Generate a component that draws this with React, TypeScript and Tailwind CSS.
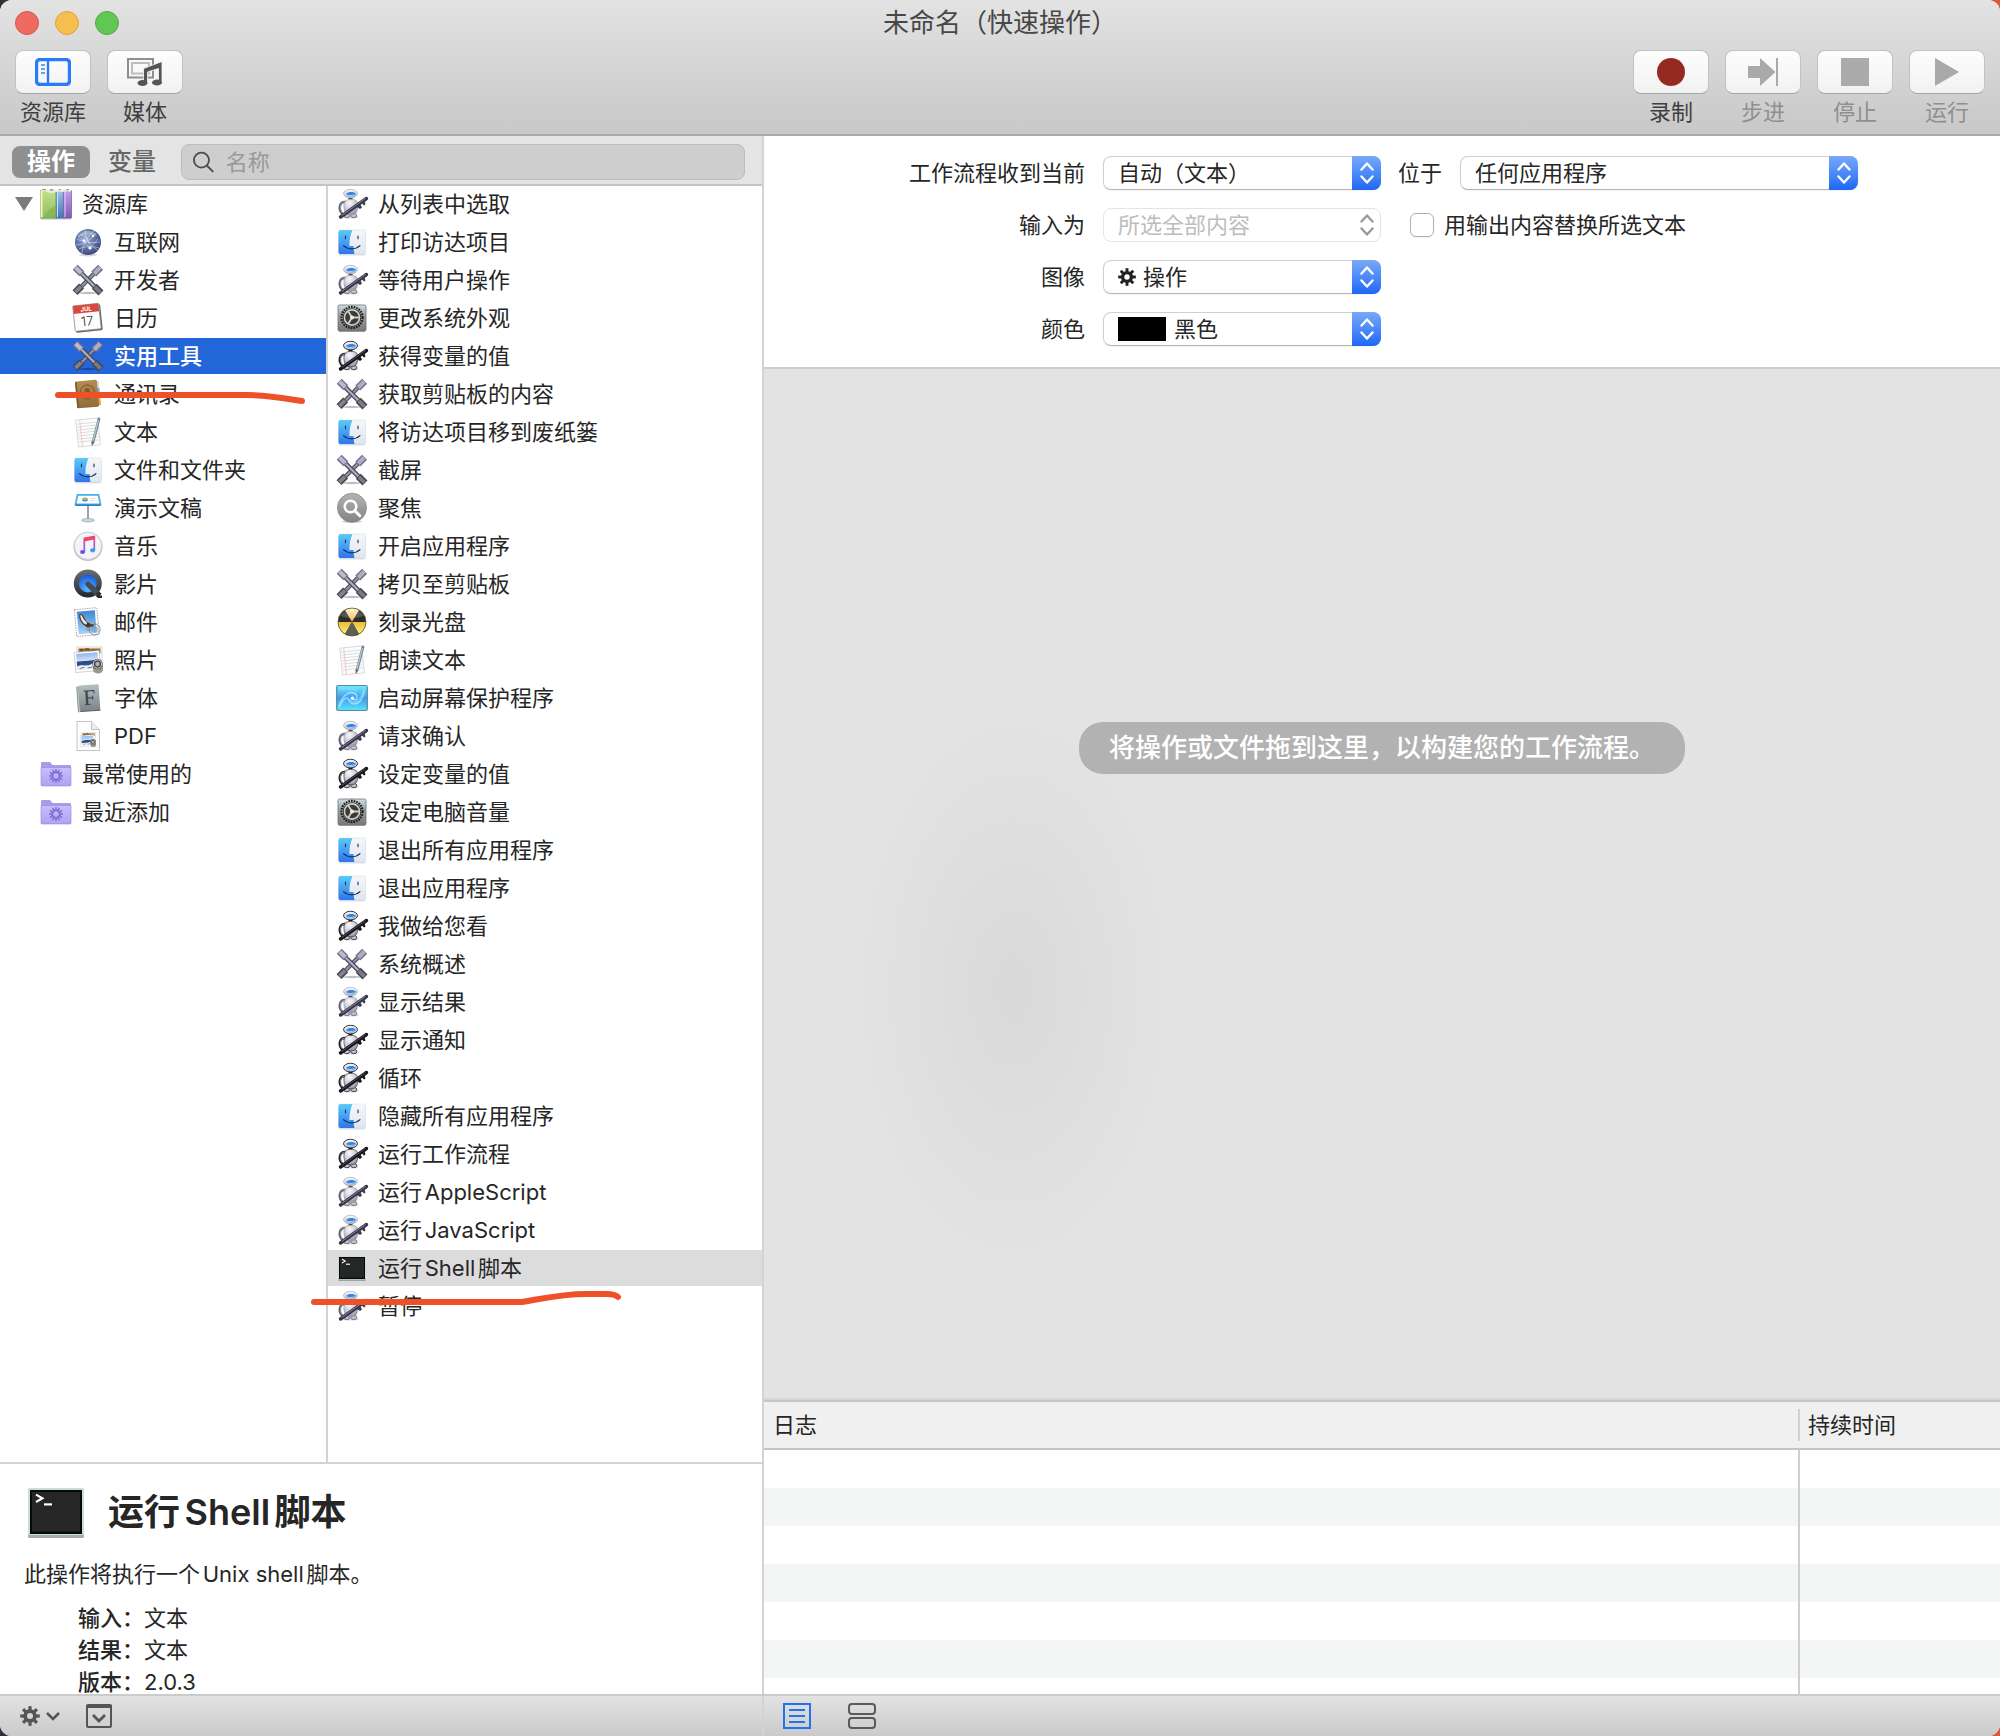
import React from "react";

type IconName =
  | "books" | "globe" | "tools" | "calendar" | "contacts" | "note" | "finder" | "keynote"
  | "music" | "quicktime" | "mail" | "photos" | "fontbook" | "pdf" | "folder" | "robot"
  | "robotDark" | "gearbox" | "spotlight" | "burn" | "swirl" | "terminal";

function Defs() {
  const grad = (id: string, stops: [string, string][], horizontal = false) => (
    <linearGradient id={id} x1="0" y1="0" x2={horizontal ? "1" : "0"} y2={horizontal ? "0" : "1"}>
      {stops.map(([o, c]) => (
        <stop key={o} offset={o} stopColor={c} />
      ))}
    </linearGradient>
  );
  return (
    <svg className="absolute size-0" aria-hidden="true">
      <defs>
        {grad("gGreen", [["0", "#c3e08c"], ["1", "#8fbf5c"]])}
        {grad("gBlueBook", [["0", "#9cc4ee"], ["1", "#3f76b4"]])}
        {grad("gPurple", [["0", "#c3a2e6"], ["1", "#8158b8"]])}
        {grad("gFinder", [["0", "#5ccbf9"], ["1", "#2f74ee"]])}
        {grad("gFinderR", [["0", "#f6f7f9"], ["1", "#dfe6f0"]])}
        {grad("gFolder", [["0", "#c9bdfb"], ["1", "#afa2f2"]])}
        {grad("gBox", [["0", "#d2dde0"], ["0.4", "#9aa1a3"], ["1", "#787878"]])}
        {grad("gQt", [["0", "#6a7078"], ["1", "#23262b"]])}
        {grad("gSpot", [["0", "#b4b4b4"], ["1", "#838383"]])}
        {grad("gMusic", [["0", "#f0446a"], ["0.55", "#a458dc"], ["1", "#3c8cf8"]])}
        {grad("gMail", [["0", "#3d86d4"], ["1", "#a8d2f4"]])}
        {grad("gPhoto", [["0", "#8fb7ee"], ["0.45", "#cfe0f6"], ["0.5", "#2c4a86"], ["0.75", "#31528e"], ["0.8", "#e7edf5"], ["1", "#cbd3dd"]])}
        {grad("gFont", [["0", "#b5bfc2"], ["1", "#7b8587"]])}
        {grad("gBoard", [["0", "#5fc0f2"], ["1", "#2a8fd8"]])}
        {grad("gSwirl", [["0", "#6ff0fb"], ["0.5", "#3d9bf0"], ["1", "#5ae6fb"]])}
        {grad("gBurnTop", [["0", "#fff3c8"], ["1", "#f1a843"]])}
        {grad("gBurnSide", [["0", "#e8b93c"], ["1", "#fff27a"]])}
        {grad("gContacts", [["0", "#b48d55"], ["1", "#936b38"]])}
        {grad("gHead", [["0", "#fafafc"], ["1", "#b9b9c4"]])}
        <radialGradient id="gGlobe" cx="0.4" cy="0.35" r="0.7">
          <stop offset="0" stopColor="#9fb0d4" />
          <stop offset="0.6" stopColor="#5a6c9e" />
          <stop offset="1" stopColor="#3a477a" />
        </radialGradient>
        <radialGradient id="gQtIn" cx="0.5" cy="0.8" r="0.8">
          <stop offset="0" stopColor="#56bcff" />
          <stop offset="1" stopColor="#1a55d8" />
        </radialGradient>
        <radialGradient id="gBody" cx="0.4" cy="0.25" r="0.85">
          <stop offset="0" stopColor="#fbfbfd" />
          <stop offset="0.5" stopColor="#cbcbd4" />
          <stop offset="1" stopColor="#80808f" />
        </radialGradient>
      </defs>
    </svg>
  );
}

const teeth = (n: number) => Array.from({ length: n }, (_, i) => (360 / n) * i);

function PhotoStack() {
  return (
    <>
      <path d="M4 2h25v18H4z" fill="#fff" stroke="#b9b9b9" strokeWidth="0.6" />
      <path d="M5.500 3.400h22v5h-22z" fill="#9a6d2b" />
      <path d="M7 5h3m2-1h4m3 1.500h5m-9 .8h3" stroke="#4d3516" strokeWidth="1" />
      <g transform="rotate(-5 14 17)">
        <rect x="2" y="6.500" width="25" height="20" fill="#fff" stroke="#b5b5b5" strokeWidth="0.6" />
        <rect x="3.800" y="8.200" width="21.400" height="16" fill="url(#gPhoto)" />
        <path d="M4 21c5-3 9 1 13-1s6 0 8 1v3H4z" fill="#eef1f5" />
        <path d="M6 23l5-1m3 1 5-.5" stroke="#4e5b6e" strokeWidth="0.8" />
      </g>
      <path d="M20 20v5c0 4.500 10 4.500 10 0v-5z" fill="#9c988e" />
      <circle cx="24.500" cy="19" r="5.200" fill="#4a4742" />
      <circle cx="24.500" cy="19" r="4.200" fill="none" stroke="#d9d6cf" strokeWidth="1" />
      <circle cx="24.500" cy="19" r="2.200" fill="#a9b2bb" />
    </>
  );
}

function Robot({ dark }: { dark?: boolean }) {
  const edge = dark ? "#22222b" : "#5d5d72";
  return (
    <>
      <ellipse cx="14" cy="28" rx="8" ry="1.600" fill="#000" opacity="0.12" />
      <ellipse cx="9.800" cy="26.500" rx="3" ry="2.200" fill="#c2c2cc" stroke={edge} strokeWidth="0.8" />
      <ellipse cx="16.800" cy="26.500" rx="3" ry="2.200" fill="#c2c2cc" stroke={edge} strokeWidth="0.8" />
      <path d="M8 13C2.500 13 1 20 5 24.500" fill="none" stroke={edge} strokeWidth="2.400" strokeLinecap="round" />
      <path d="M7.500 13C3.500 13.500 2.500 19 5 23.500" fill="none" stroke="#c4c4d0" strokeWidth="0.7" />
      <path d="M8 12.500c2-3 10-3 12 0 1.600 3 1 9.500-1.500 12-2 1.800-7 1.800-9 0C7 22.500 6 16 8 12.500z" fill="url(#gBody)" stroke={dark ? "#3c3c47" : "#9c9caa"} strokeWidth="0.7" />
      <rect x="11.500" y="8" width="4" height="2.200" fill={dark ? "#111" : "#3d3d46"} />
      <ellipse cx="13.500" cy="4.600" rx="7" ry="4.300" fill="url(#gHead)" stroke={dark ? "#33333c" : "#a9a9b6"} strokeWidth={dark ? 1 : 0.7} />
      <path d="M9.300 4.800c2-2.400 7.500-2.400 9.500-.3-.6 3.400-8.500 3.600-9.500.3z" fill="#2f86e6" />
      <path d="M10.800 6c2 .8 4.500.8 6.500-.4" stroke="#9fdcff" strokeWidth="1" fill="none" />
      <path d="M20 18l3.500-2.500 1.500 3-2 1.500zM25 14.500l2.500-2 1 3-1.500 1z" fill={dark ? "#15151c" : "#3b3b4c"} />
      <path d="M3.500 28 29.500 9.500" stroke={dark ? "#14141d" : "#35354a"} strokeWidth="3.400" strokeLinecap="round" />
      <path d="M4.500 26.700 28.500 9.500" stroke={dark ? "#5b5b70" : "#8b8ba6"} strokeWidth="0.9" />
    </>
  );
}

function drawing(name: IconName): React.ReactNode {
  switch (name) {
    case "books":
      return (
        <>
          <path d="M0 29.500h30" stroke="#6d8a80" strokeWidth="2" opacity="0.5" />
          <rect x="-0.500" y="1.500" width="15.500" height="27.500" fill="url(#gGreen)" stroke="#6f8f4f" strokeWidth="0.7" />
          <path d="M.5 2v26.500" stroke="#eff6c4" strokeWidth="2" />
          <path d="M3 28.500C6 22 9 19 14.500 17v11.500z" fill="#79ad48" opacity="0.5" />
          <rect x="15.200" y="1.500" width="7" height="27.500" fill="url(#gBlueBook)" stroke="#4a6e9b" strokeWidth="0.6" />
          <path d="M16.500 2v26" stroke="#c8e0f8" strokeWidth="1" />
          <rect x="22.600" y="1.500" width="8" height="27.500" fill="url(#gPurple)" stroke="#6c4f98" strokeWidth="0.6" />
          <path d="M24 2v26" stroke="#e6d2f6" strokeWidth="1" />
          <path d="M0 2c2-1.400 4.500-1.400 7 0s5 1 7.500 0c2-1 4-1 7 0 3-1 6-1 8.500 0" stroke="#e9eee4" strokeWidth="2.200" fill="none" />
          <path d="M1 .6h4m4 0h3m6 0h2m5 0h3" stroke="#75806f" strokeWidth="0.8" />
        </>
      );
    case "globe":
      return (
        <>
          <ellipse cx="15" cy="28" rx="9" ry="1.500" fill="#000" opacity="0.15" />
          <circle cx="15" cy="15" r="13" fill="url(#gGlobe)" />
          <path d="M5 9c6-3 10 2 12 12M3 18c8 0 15-6 20-12M9 26c1-8 5-17 12-22M4 12c7 4 17 4 23 3M12 3c1 9 6 16 12 20M6 22c6-3 13-3 20-1M17 21l8-9M17 21 5 9" stroke="#e6edfb" strokeWidth="0.7" fill="none" opacity="0.7" />
          <circle cx="17" cy="21" r="1.600" fill="#fff" />
          <circle cx="11" cy="13.500" r="1.300" fill="#fff" />
          <circle cx="20" cy="9" r="1.200" fill="#fff" />
          <path d="M6 9c3-6 14-7 18 0-6-2-12-2-18 0z" fill="#fff" opacity="0.3" />
        </>
      );
    case "tools":
      return (
        <>
          <ellipse cx="15" cy="28" rx="9" ry="1.200" fill="#000" opacity="0.25" />
          <g stroke="#4b4b63" strokeLinecap="butt">
            <path d="M6 24 24 5.500" strokeWidth="4.200" />
            <path d="M6.300 23.700 24 5.500" stroke="#92929f" strokeWidth="2.200" />
            <path d="M20.800 9 27.600 2.200" stroke="#6f6f92" strokeWidth="7" />
            <path d="M21.300 8.500 27.200 2.600" stroke="#adadbc" strokeWidth="4.200" />
            <path d="M8.600 21 2 27.600" stroke="#484854" strokeWidth="7" />
            <path d="M8 21.500 2.500 27" stroke="#83838f" strokeWidth="3.800" />
            <path d="M6 6 24 24" strokeWidth="4.600" />
            <path d="M6 6 24 24" stroke="#b2b2be" strokeWidth="2" />
            <path d="M8.800 8.800 2.200 2.200" stroke="#727296" strokeWidth="7" />
            <path d="M8.200 8.200 2.700 2.700" stroke="#bcbcc9" strokeWidth="4" />
            <path d="M21.300 21.300 28 28" stroke="#464652" strokeWidth="7" />
            <path d="M21.800 21.800 27.500 27.500" stroke="#7b7b87" strokeWidth="3.800" />
          </g>
        </>
      );
    case "calendar":
      return (
        <g transform="rotate(-6 15 15)">
          <rect x="1.500" y="2.500" width="27" height="26" rx="1.500" fill="#5f6a6e" />
          <rect x="1" y="1.500" width="26" height="25.500" rx="1" fill="#fdfdfd" stroke="#8a9699" strokeWidth="0.8" />
          <path d="M1.200 1.500h25.600v8H1.200z" fill="#d9493f" />
          <text x="14" y="8" fontSize="6" fontWeight="700" textAnchor="middle" fill="#fff" fontFamily="Inter">JUL</text>
          <text x="14" y="22.500" fontSize="13" fontWeight="300" textAnchor="middle" fill="#333" fontFamily="Inter">17</text>
        </g>
      );
    case "contacts":
      return (
        <g transform="rotate(-5 15 15)">
          <path d="M24 3h3v7h-3z" fill="#d9dde2" />
          <path d="M24 10h3v8h-3z" fill="#63b7e0" />
          <path d="M24 18h3v9h-3z" fill="#e3a93e" />
          <rect x="3" y="1.500" width="22" height="27" rx="1.500" fill="url(#gContacts)" />
          <path d="M4 2v26" stroke="#7b5728" strokeWidth="1.500" />
          <circle cx="14.500" cy="13" r="7" fill="none" stroke="#7d5b2e" strokeWidth="1" />
          <circle cx="14.500" cy="11.500" r="2.600" fill="#7d5b2e" />
          <path d="M10 17.500c1-4 8-4 9 0-2.500 2-6.500 2-9 0z" fill="#7d5b2e" />
        </g>
      );
    case "note":
      return (
        <>
          <g transform="rotate(-6 15 15)">
            <rect x="4" y="2" width="22" height="27" fill="#fcfcfc" stroke="#d2d2d2" strokeWidth="0.8" />
            <path d="M5 6h20M5 9h20M5 12h20M5 15h20M5 18h20M5 21h20M5 24h20" stroke="#d3d6da" strokeWidth="0.8" />
            <path d="M8 2.500v26" stroke="#f6c4c0" strokeWidth="0.9" />
          </g>
          <path d="M26 2 20 25" stroke="#71838f" strokeWidth="2.800" strokeLinecap="round" />
          <path d="M25.500 3 20 24" stroke="#b6cbd8" strokeWidth="1.200" />
          <path d="m18.500 24.500 3 .8-2.800 4z" fill="#6a6a6a" />
        </>
      );
    case "finder":
      return (
        <>
          <rect x="1.500" y="4" width="27" height="24.500" rx="2" fill="#9fb0c4" opacity="0.4" />
          <rect x="1.500" y="3" width="27" height="24" rx="2" fill="url(#gFinderR)" stroke="#cfd6de" strokeWidth="0.4" />
          <path d="M15.500 3H3.500a2 2 0 0 0-2 2v20a2 2 0 0 0 2 2h14c-.6-2.500-.9-5-.9-8h-4.200C12.300 12.500 13.500 7.500 15.500 3z" fill="url(#gFinder)" />
          <path d="M8.500 9v2.800M21 9v2.800" stroke="#15314e" strokeWidth="1.100" strokeLinecap="round" />
          <path d="M6.500 18.700c4.500 4.200 12 4.200 16.500 0" stroke="#15314e" strokeWidth="1.100" fill="none" strokeLinecap="round" />
        </>
      );
    case "keynote":
      return (
        <>
          <path d="M15 12v14" stroke="#7d8c96" strokeWidth="1.600" />
          <ellipse cx="15" cy="27.200" rx="6.500" ry="1.800" fill="#c9d3da" stroke="#93a0a8" strokeWidth="0.6" />
          <path d="M4.500 1.800h21l2 9.700H2.500z" fill="#fff" stroke="#46aeea" strokeWidth="1.800" />
          <path d="M2.500 11.500h25v1.500h-25z" fill="#2d7fc0" />
          <path d="M9 6.500a3 2 0 0 1 3-2v2z" fill="#7ac943" />
          <path d="M12 4.500a3 2 0 0 1 3 2h-3z" fill="#f7931e" />
          <path d="M9 6.500h6a3 2 0 0 1-3 2 3 2 0 0 1-3-2z" fill="#3f8fe8" />
          <path d="M17.500 5.500h5m-5 2h4" stroke="#c9c9c9" strokeWidth="0.7" />
        </>
      );
    case "music":
      return (
        <>
          <circle cx="15" cy="15.500" r="14.600" fill="#bfc1ca" />
          <circle cx="15" cy="14.800" r="13.700" fill="#f4f4f8" stroke="#cccdd6" strokeWidth="1" />
          <path d="M11.300 21V7.500l10-2v13.800" fill="none" stroke="url(#gMusic)" strokeWidth="1.700" />
          <path d="m11.300 7 10-2v3.600l-10 2z" fill="#ef4769" />
          <ellipse cx="9.600" cy="21" rx="2.600" ry="2.100" fill="#7a4df0" />
          <ellipse cx="19.600" cy="19.300" rx="2.600" ry="2.100" fill="#3f97f5" />
        </>
      );
    case "quicktime":
      return (
        <>
          <circle cx="14.800" cy="14.500" r="14" fill="url(#gQt)" />
          <circle cx="14.800" cy="14.500" r="9" fill="url(#gQtIn)" />
          <path d="M15.500 15.500 27 26.500" stroke="#2b2f35" strokeWidth="4.500" />
          <path d="M14.300 12.600a2.600 2.600 0 0 0-1.600 4L22 26l4-4-9-8.500a3 3 0 0 0-2.700-.9z" fill="#474c54" />
          <path d="M22 26.500h7V29h-4z" fill="#23262b" />
        </>
      );
    case "mail":
      return (
        <g transform="rotate(-5 15 15)">
          <rect x="2.500" y="1.500" width="22.500" height="27" fill="#fdfdfd" stroke="#a9a9a9" strokeWidth="1" strokeDasharray="1.500 1" />
          <rect x="4.800" y="3.800" width="18" height="22.500" fill="url(#gMail)" />
          <path d="M7 7c2-1.500 3.500 0 4.500 3l2 4.500 5 3 3.500-.5-2.500 3-5.500.5-4-3.500C8 14.500 6 10.500 7 7z" fill="#4a3524" />
          <path d="M8 7c1.500 0 2.500 3 3 5l3 4-1 1.500c-3.500-2-5.500-6-5-10.500z" fill="#efe6d8" />
          <path d="m18 17 3-.5.500 1.500z" fill="#f3c04a" />
          <circle cx="21" cy="23" r="5.500" fill="none" stroke="#6a7480" strokeWidth="0.9" opacity="0.8" />
          <circle cx="21" cy="23" r="3.500" fill="#5b83ad" opacity="0.45" />
          <path d="M12 21h6m-6 2h5" stroke="#6f84a0" strokeWidth="0.7" />
        </g>
      );
    case "photos":
      return <PhotoStack />;
    case "fontbook":
      return (
        <g transform="rotate(-4 15 15)">
          <path d="M4 3h3v25.500H4z" fill="#8b9597" />
          <path d="M5.500 3v25.500" stroke="#d5dcde" strokeWidth="0.7" />
          <rect x="6.500" y="2" width="20" height="26" rx="1" fill="url(#gFont)" />
          <path d="M6.500 28h20" stroke="#566063" strokeWidth="1" />
          <text x="16.500" y="22" fontSize="22" textAnchor="middle" fill="#3b4446" fontFamily="Liberation Serif">F</text>
        </g>
      );
    case "pdf":
      return (
        <>
          <path d="M4 0.500h14.500L26.500 8.500V29.500H4z" fill="#fdfdfd" stroke="#bcbcbc" strokeWidth="0.9" />
          <path d="M18.500 .5v8h8" fill="#ededed" stroke="#bcbcbc" strokeWidth="0.9" />
          <g transform="translate(6.500 10.500) scale(0.55)"><PhotoStack /></g>
        </>
      );
    case "folder":
      return (
        <>
          <path d="M0 4.500c0-1 .5-1.500 1.500-1.500H9l2.500 3H28.500c1 0 1.500.5 1.500 1.500V26H0z" fill="#a79bea" />
          <path d="M0 8.500h30V26c0 .6-.4 1-1 1H1c-.6 0-1-.4-1-1z" fill="url(#gFolder)" stroke="#9488d8" strokeWidth="0.6" />
          {teeth(12).map((a) => (
            <rect key={a} x="14.200" y="10" width="1.600" height="4" fill="#8274d6" transform={`rotate(${a} 15 17)`} />
          ))}
          <circle cx="15" cy="17" r="3.900" fill="none" stroke="#8274d6" strokeWidth="2.400" />
        </>
      );
    case "robot":
      return <Robot />;
    case "robotDark":
      return <Robot dark />;
    case "gearbox":
      return (
        <>
          <rect x="1" y="3" width="28" height="26" rx="2" fill="#6a6a6a" opacity="0.5" />
          <rect x="1" y="2" width="28" height="26" rx="1.800" fill="url(#gBox)" stroke="#6d7476" strokeWidth="0.8" />
          <circle cx="15" cy="14.500" r="10.600" fill="none" stroke="#1e1e1e" strokeWidth="2.200" strokeDasharray="1.700 1" />
          <circle cx="15" cy="14.500" r="9.200" fill="#262626" />
          <circle cx="15" cy="14.500" r="7.600" fill="#3a3a38" stroke="#d0d0c8" strokeWidth="1.600" />
          <path d="M15 14.500 11 8M15 14.500h7.500M15 14.500l-4 6.500" stroke="#d0d0c8" strokeWidth="1.800" />
          <circle cx="15" cy="14.500" r="2" fill="#efefe8" />
        </>
      );
    case "spotlight":
      return (
        <>
          <ellipse cx="15" cy="28.500" rx="10" ry="1.500" fill="#000" opacity="0.2" />
          <circle cx="15" cy="14.800" r="14.500" fill="url(#gSpot)" stroke="#868686" strokeWidth="0.8" />
          <circle cx="13.500" cy="13.500" r="5.800" fill="none" stroke="#fff" strokeWidth="2.400" />
          <path d="m17.800 17.800 5 5" stroke="#fff" strokeWidth="3" strokeLinecap="round" />
        </>
      );
    case "burn":
      return (
        <>
          <circle cx="15" cy="15" r="14" fill="#2c2c2a" />
          <path d="M15 15 8 2.900a14 14 0 0 1 14 0z" fill="url(#gBurnTop)" />
          <path d="M15 15H1a14 14 0 0 0 7 12.100z" fill="url(#gBurnSide)" />
          <path d="M15 15h14a14 14 0 0 1-7 12.100z" fill="url(#gBurnSide)" />
          <path d="M15 15 8 27.100a14 14 0 0 0 14 0z" fill="#5e5e58" />
          <circle cx="15" cy="15" r="14" fill="none" stroke="#6f5a1e" strokeWidth="0.8" />
          <path d="M3.500 9C8 0 22 0 26.500 9c-6 2.500-17 2.500-23 0z" fill="#fff" opacity="0.2" />
        </>
      );
    case "swirl":
      return (
        <>
          <rect x="-0.300" y="2.500" width="30.600" height="25" rx="1.500" fill="url(#gSwirl)" stroke="#5f8797" strokeWidth="1.200" />
          <path d="M15.500 15.300c2 3 5 1 4.500-2s-5-5-9-3S3 18 2 24c3-6 6-9 8-9s2 6 7 6 9-5 10-13" stroke="#c4f5ff" strokeWidth="1.500" fill="none" opacity="0.65" />
          <path d="M12 16c1 3 5 4 8 2s6-7 8-14M3 6c5 0 12-2 17 2" stroke="#8fdcff" strokeWidth="1.600" fill="none" opacity="0.6" />
          <circle cx="15.500" cy="15.300" r="1.800" fill="#e9fdff" />
        </>
      );
    case "terminal":
      return (
        <>
          <rect x="1" y="3.500" width="28" height="24.500" rx="0.800" fill="#7f8a8c" opacity="0.7" />
          <rect x="1" y="3" width="28" height="23.500" rx="0.800" fill="#c9dde0" />
          <rect x="2" y="4" width="26" height="22" fill="#070907" />
          <rect x="3" y="5" width="24" height="19.800" fill="#262626" />
          <path d="m5 6.300 3.200 1.800L5 10" stroke="#fff" strokeWidth="1.100" fill="none" />
          <path d="M9 11.200h4" stroke="#fff" strokeWidth="1.100" />
        </>
      );
  }
}

function Icon({ name, className = "size-[30px]" }: { name: IconName; className?: string }) {
  return (
    <svg viewBox="0 0 30 30" className={`${className} shrink-0 overflow-visible`} aria-hidden="true">
      {drawing(name)}
    </svg>
  );
}

function Gear({ color, className }: { color: string; className: string }) {
  return (
    <svg viewBox="0 0 20 20" className={`${className} shrink-0`} aria-hidden="true">
      {teeth(8).map((a) => (
        <rect key={a} x="8.400" y="0.200" width="3.200" height="5" fill={color} transform={`rotate(${a} 10 10)`} />
      ))}
      <circle cx="10" cy="10" r="4.900" fill="none" stroke={color} strokeWidth="3.800" />
    </svg>
  );
}

const library: [IconName, string][] = [
  ["globe", "互联网"], ["tools", "开发者"], ["calendar", "日历"], ["tools", "实用工具"],
  ["contacts", "通讯录"], ["note", "文本"], ["finder", "文件和文件夹"], ["keynote", "演示文稿"],
  ["music", "音乐"], ["quicktime", "影片"], ["mail", "邮件"], ["photos", "照片"],
  ["fontbook", "字体"], ["pdf", "PDF"],
];

const actions: [IconName, string][] = [
  ["robot", "从列表中选取"], ["finder", "打印访达项目"], ["robot", "等待用户操作"],
  ["gearbox", "更改系统外观"], ["robotDark", "获得变量的值"], ["tools", "获取剪贴板的内容"],
  ["finder", "将访达项目移到废纸篓"], ["tools", "截屏"], ["spotlight", "聚焦"],
  ["finder", "开启应用程序"], ["tools", "拷贝至剪贴板"], ["burn", "刻录光盘"],
  ["note", "朗读文本"], ["swirl", "启动屏幕保护程序"], ["robot", "请求确认"],
  ["robotDark", "设定变量的值"], ["gearbox", "设定电脑音量"], ["finder", "退出所有应用程序"],
  ["finder", "退出应用程序"], ["robotDark", "我做给您看"], ["tools", "系统概述"],
  ["robot", "显示结果"], ["robotDark", "显示通知"], ["robotDark", "循环"],
  ["finder", "隐藏所有应用程序"], ["robotDark", "运行工作流程"], ["robot", "运行AppleScript"],
  ["robot", "运行JavaScript"], ["terminal", "运行Shell脚本"], ["robot", "暂停"],
];

function ToolButton({ label, disabled, children }: { label: string; disabled?: boolean; children: React.ReactNode }) {
  return (
    <button type="button" disabled={disabled} className="flex w-[76px] flex-col items-center gap-1">
      <span className="flex h-[44px] w-full items-center justify-center rounded-lg border border-[#c2c2c2] border-b-[#a8a8a8] bg-linear-to-b from-[#fdfdfd] to-[#f2f2f2]">
        {children}
      </span>
      <span className={disabled ? "leading-7 text-[#8f8f8f]" : "leading-7 text-[#3f3f3f]"}>{label}</span>
    </button>
  );
}

function Chevrons({ muted }: { muted?: boolean }) {
  return (
    <span
      className={
        muted
          ? "pointer-events-none absolute inset-y-0 right-0 flex w-[29px] items-center justify-center text-[#9a9a9a]"
          : "pointer-events-none absolute inset-y-0 right-0 flex w-[29px] items-center justify-center rounded-r-lg bg-linear-to-b from-[#78a9f8] to-[#1d67f6] text-white"
      }
    >
      <svg viewBox="0 0 14 22" className="h-[22px] w-[14px]" fill="none" stroke="currentColor" strokeWidth="2.400" strokeLinecap="round" strokeLinejoin="round">
        <path d="m1.500 7.500 5.500-6 5.500 6M1.500 14.500l5.500 6 5.500-6" />
      </svg>
    </span>
  );
}

function Popup({ id, value, width, pad, disabled, adornment }: {
  id: string; value: string; width: string; pad: string; disabled?: boolean; adornment?: React.ReactNode;
}) {
  return (
    <span className={`relative ${width}`}>
      <select
        id={id}
        disabled={disabled}
        className={`h-[34px] w-full appearance-none rounded-lg border bg-white pr-8 opacity-100 ${pad} ${
          disabled ? "border-[#e4e4e4] text-[#bdbdbd]" : "border-[#cfcfcf] border-b-[#b4b4b4] text-[#262626] shadow-xs"
        }`}
      >
        <option>{value}</option>
      </select>
      {adornment && <span className="pointer-events-none absolute inset-y-0 left-[15px] flex items-center">{adornment}</span>}
      <Chevrons muted={disabled} />
    </span>
  );
}

const rowBase = "flex h-[36px] w-full items-center text-left";

export default function App() {
  return (
    <div className="bg-linear-to-r from-[#30303a] to-[#d8593c]">
      <Defs />
      <div className="relative flex min-h-screen flex-col overflow-hidden rounded-[12px] bg-white font-[Inter,'Noto_Sans_CJK_SC',sans-serif] text-[22px] text-[#262626] [text-autospace:normal]">
        <header className="border-b-2 border-[#a9a9a9] bg-linear-to-b from-[#e3e3e3] to-[#c8c8c8] px-[15px] pb-2">
          <div className="grid h-[46px] grid-cols-[1fr_auto_1fr] items-center">
            <div className="flex gap-4">
              <button type="button" aria-label="关闭" className="size-6 rounded-full border border-[#d9564c] bg-[#ed6b60]" />
              <button type="button" aria-label="最小化" className="size-6 rounded-full border border-[#dca23c] bg-[#f5bf50]" />
              <button type="button" aria-label="缩放" className="size-6 rounded-full border border-[#4fae3f] bg-[#62c655]" />
            </div>
            <h1 className="text-[26px] leading-8 text-[#474747]">未命名（快速操作）</h1>
          </div>
          <div className="flex justify-between pt-1">
            <div className="flex gap-4">
              <ToolButton label="资源库">
                <svg viewBox="0 0 36 28" className="h-7 w-9" fill="none" stroke="#2b7bf6">
                  <rect x="1.500" y="1.500" width="33" height="25" rx="3.500" strokeWidth="3.400" />
                  <path d="M13 2v24" strokeWidth="2.400" />
                  <path d="M6 7h4M6 11h4M6 15h4" strokeWidth="2" opacity="0.7" />
                </svg>
              </ToolButton>
              <ToolButton label="媒体">
                <svg viewBox="0 0 36 28" className="h-7 w-9" fill="none">
                  <rect x="1" y="1" width="25" height="18.500" stroke="#8e8e8e" strokeWidth="2" />
                  <rect x="5" y="5" width="17" height="10.500" stroke="#bdbdbd" strokeWidth="2" />
                  <path d="M16.500 10.500 35 3.500v20.500h-3.500V10.500L20.500 14v11H16.500z" fill="#555" stroke="#f8f8f8" strokeWidth="0.800" />
                  <ellipse cx="15.500" cy="25" rx="5" ry="3" fill="#555" />
                  <ellipse cx="30" cy="24.500" rx="5" ry="3" fill="#555" />
                </svg>
              </ToolButton>
            </div>
            <div className="flex gap-4">
              <ToolButton label="录制">
                <span className="size-7 rounded-full bg-[#952b20]" />
              </ToolButton>
              <ToolButton label="步进" disabled>
                <svg viewBox="0 0 30 28" className="h-7 w-[30px]" fill="#a9a9a9">
                  <path d="M0 8h12V0l15.500 14L12 28v-8H0zM28 0h2v28h-2z" />
                </svg>
              </ToolButton>
              <ToolButton label="停止" disabled>
                <span className="size-7 bg-[#ababab]" />
              </ToolButton>
              <ToolButton label="运行" disabled>
                <svg viewBox="0 0 24 28" className="h-7 w-6" fill="#a9a9a9">
                  <path d="M0 0l24 14L0 28z" />
                </svg>
              </ToolButton>
            </div>
          </div>
        </header>

        <main className="flex flex-1">
          <section className="flex w-[764px] shrink-0 flex-col border-r-2 border-[#d3d3d3]">
            <div className="flex h-[50px] items-center border-b-2 border-[#c4c4c4] bg-[#e4e4e4] pt-1 pr-[17px] pl-3">
              <button type="button" className="h-8 w-[78px] rounded-lg bg-[#8f8f8f] text-[24px] leading-8 font-bold text-white">操作</button>
              <button type="button" className="w-[84px] text-[24px] leading-8 font-medium text-[#666]">变量</button>
              <label className="ml-[7px] flex h-[36px] flex-1 items-center gap-3 rounded-lg border border-[#bdbdbd] bg-[#cecece] px-[11px]">
                <svg viewBox="0 0 22 22" className="size-[22px]" fill="none" stroke="#4c4c4c" strokeWidth="2" strokeLinecap="round">
                  <circle cx="9" cy="9" r="8" />
                  <path d="m15 15 6 6" />
                </svg>
                <input type="search" aria-label="名称" placeholder="名称" className="w-full bg-transparent outline-none placeholder:text-[#989898]" />
              </label>
            </div>

            <div className="flex flex-1">
              <nav aria-label="资源库" className="w-[328px] shrink-0 border-r-2 border-[#d3d3d3]">
                <ul className="flex flex-col gap-0.5">
                  <li>
                    <button type="button" className={`${rowBase} pl-[15px]`}>
                      <svg viewBox="0 0 18 14" className="mr-2 h-[14px] w-[18px]" fill="#7b7b7b"><path d="M0 0h18L9 14z" /></svg>
                      <Icon name="books" />
                      <span className="ml-[11px]">资源库</span>
                    </button>
                  </li>
                  {library.map(([icon, name]) => (
                    <li key={name}>
                      <button
                        type="button"
                        className={`${rowBase} gap-[11px] pl-[73px] ${name === "实用工具" ? "bg-[#2266d9] font-medium text-white" : ""}`}
                      >
                        <Icon name={icon} />
                        {name}
                      </button>
                    </li>
                  ))}
                  {["最常使用的", "最近添加"].map((name) => (
                    <li key={name}>
                      <button type="button" className={`${rowBase} gap-[11px] pl-[41px]`}>
                        <Icon name="folder" />
                        {name}
                      </button>
                    </li>
                  ))}
                </ul>
              </nav>
              <ul className="flex flex-1 flex-col gap-0.5">
                {actions.map(([icon, name]) => (
                  <li key={name}>
                    <button type="button" className={`${rowBase} gap-[11px] pl-[9px] ${icon === "terminal" ? "bg-[#dcdcdc]" : ""}`}>
                      <Icon name={icon} />
                      {name}
                    </button>
                  </li>
                ))}
              </ul>
            </div>

            <article className="h-[232px] overflow-hidden border-t-2 border-[#d3d3d3] px-6 pt-4">
              <div className="flex h-16 items-center gap-[22px]">
                <Icon name="terminal" className="ml-0.5 size-[60px]" />
                <h2 className="text-[36px] leading-10 font-semibold">运行Shell脚本</h2>
              </div>
              <p className="mt-4 leading-7">此操作将执行一个Unix shell脚本。</p>
              <dl className="mt-3.5 grid grid-cols-[120px_1fr] leading-8">
                {[["输入：", "文本"], ["结果：", "文本"], ["版本：", "2.0.3"]].map(([k, v]) => (
                  <React.Fragment key={k}>
                    <dt className="text-right font-medium">{k}</dt>
                    <dd>{v}</dd>
                  </React.Fragment>
                ))}
              </dl>
            </article>
          </section>

          <section className="flex min-w-0 flex-1 flex-col">
            <form className="grid grid-cols-[321px_1fr] gap-x-[18px] gap-y-[18px] border-b-2 border-[#cdcdcd] pt-5 pb-[21px]">
              <label htmlFor="receives" className="text-right leading-[34px]">工作流程收到当前</label>
              <div className="flex items-center">
                <Popup id="receives" value="自动（文本）" width="w-[278px]" pad="pl-[14px]" />
                <label htmlFor="location" className="ml-[17px] mr-[18px] leading-[34px]">位于</label>
                <Popup id="location" value="任何应用程序" width="w-[398px]" pad="pl-[14px]" />
              </div>
              <label htmlFor="input" className="text-right leading-[34px]">输入为</label>
              <div className="flex items-center">
                <Popup id="input" value="所选全部内容" width="w-[278px]" pad="pl-[14px]" disabled />
                <input id="replace" type="checkbox" className="ml-[29px] size-6 appearance-none rounded-md border border-[#b0b0b0] bg-white shadow-xs" />
                <label htmlFor="replace" className="ml-2.5 leading-[34px]">用输出内容替换所选文本</label>
              </div>
              <label htmlFor="image" className="text-right leading-[34px]">图像</label>
              <div className="flex items-center">
                <Popup id="image" value="操作" width="w-[278px]" pad="pl-[39px]" adornment={<Gear color="#222" className="size-[18px]" />} />
              </div>
              <label htmlFor="color" className="text-right leading-[34px]">颜色</label>
              <div className="flex items-center">
                <Popup id="color" value="黑色" width="w-[278px]" pad="pl-[70px]" adornment={<span className="h-6 w-12 bg-black" />} />
              </div>
            </form>

            <div className="flex flex-1 items-start justify-center bg-[#e3e3e3] bg-[radial-gradient(ellipse_160px_280px_at_250px_620px,#d9d9d9,#e3e3e3)] pt-[353px]">
              <p className="rounded-[24px] bg-[#b2b2b2] px-[30px] text-[26px] leading-[52px] font-medium text-white">
                将操作或文件拖到这里，以构建您的工作流程。
              </p>
            </div>

            <div className="h-[296px] overflow-hidden border-t-2 border-[#d6d6d6]">
              <table className="w-full table-fixed border-separate border-spacing-0">
                <thead>
                  <tr className="h-[50px] bg-[#f0f0f0]">
                    <th className="border-y-2 border-[#c6c6c6] px-[9px] py-0 text-left font-normal">日志</th>
                    <th className="w-[202px] border-y-2 border-[#c6c6c6] p-0 text-left font-normal">
                      <span className="block border-l-2 border-[#d0d0d0] pl-2 leading-8">持续时间</span>
                    </th>
                  </tr>
                </thead>
                <tbody>
                  {[0, 1, 2, 3, 4, 5, 6].map((n) => (
                    <tr key={n} className="h-[38px] even:bg-[#f4f5f5]">
                      <td />
                      <td className="border-l-2 border-[#cfcfcf]" />
                    </tr>
                  ))}
                </tbody>
              </table>
            </div>
          </section>
        </main>

        <footer className="flex h-[42px] border-t-2 border-[#cbcbcb] bg-linear-to-b from-[#e3e3e3] to-[#cacaca]">
          <div className="flex w-[764px] items-center gap-[26px] border-r-2 border-[#d3d3d3] pl-5">
            <button type="button" aria-label="操作菜单" className="flex items-center gap-1.5">
              <Gear color="#555" className="size-5" />
              <svg viewBox="0 0 14 9" className="h-[9px] w-[14px]" fill="none" stroke="#555" strokeWidth="2.600"><path d="m1 1 6 6 6-6" /></svg>
            </button>
            <button type="button" aria-label="显示描述">
              <svg viewBox="0 0 26 24" className="h-6 w-[26px]" fill="none" stroke="#555" strokeWidth="2">
                <rect x="1" y="1" width="24" height="22" rx="1" />
                <path d="M0 2.500h26" strokeWidth="3" />
                <path d="m7 11 6 6 6-6" strokeWidth="2.800" />
              </svg>
            </button>
          </div>
          <div className="flex flex-1 items-center gap-[37px] pl-[19px]">
            <button type="button" aria-label="日志">
              <svg viewBox="0 0 28 26" className="h-[26px] w-7" fill="none" stroke="#2172f0" strokeWidth="2">
                <rect x="1" y="1" width="26" height="24" />
                <path d="M6 7h16M6 13h16M6 19h16" />
              </svg>
            </button>
            <button type="button" aria-label="变量">
              <svg viewBox="0 0 28 26" className="h-[26px] w-7" fill="none" stroke="#5a5a5a" strokeWidth="2">
                <rect x="1" y="1" width="26" height="10" rx="3" />
                <rect x="1" y="15" width="26" height="10" rx="3" />
              </svg>
            </button>
          </div>
        </footer>

        <svg viewBox="0 0 640 1320" className="pointer-events-none absolute top-0 left-0 h-[1320px] w-[640px]" fill="none" stroke="#ee5127" strokeWidth="6" strokeLinecap="round" strokeLinejoin="round" aria-hidden="true">
          <path d="M58 395H246C266 395 282 398 302 401" />
          <path d="M314 1302H522C546 1298 562 1294 586 1294H606C612 1294 616 1295 618 1297" />
        </svg>
      </div>
    </div>
  );
}
